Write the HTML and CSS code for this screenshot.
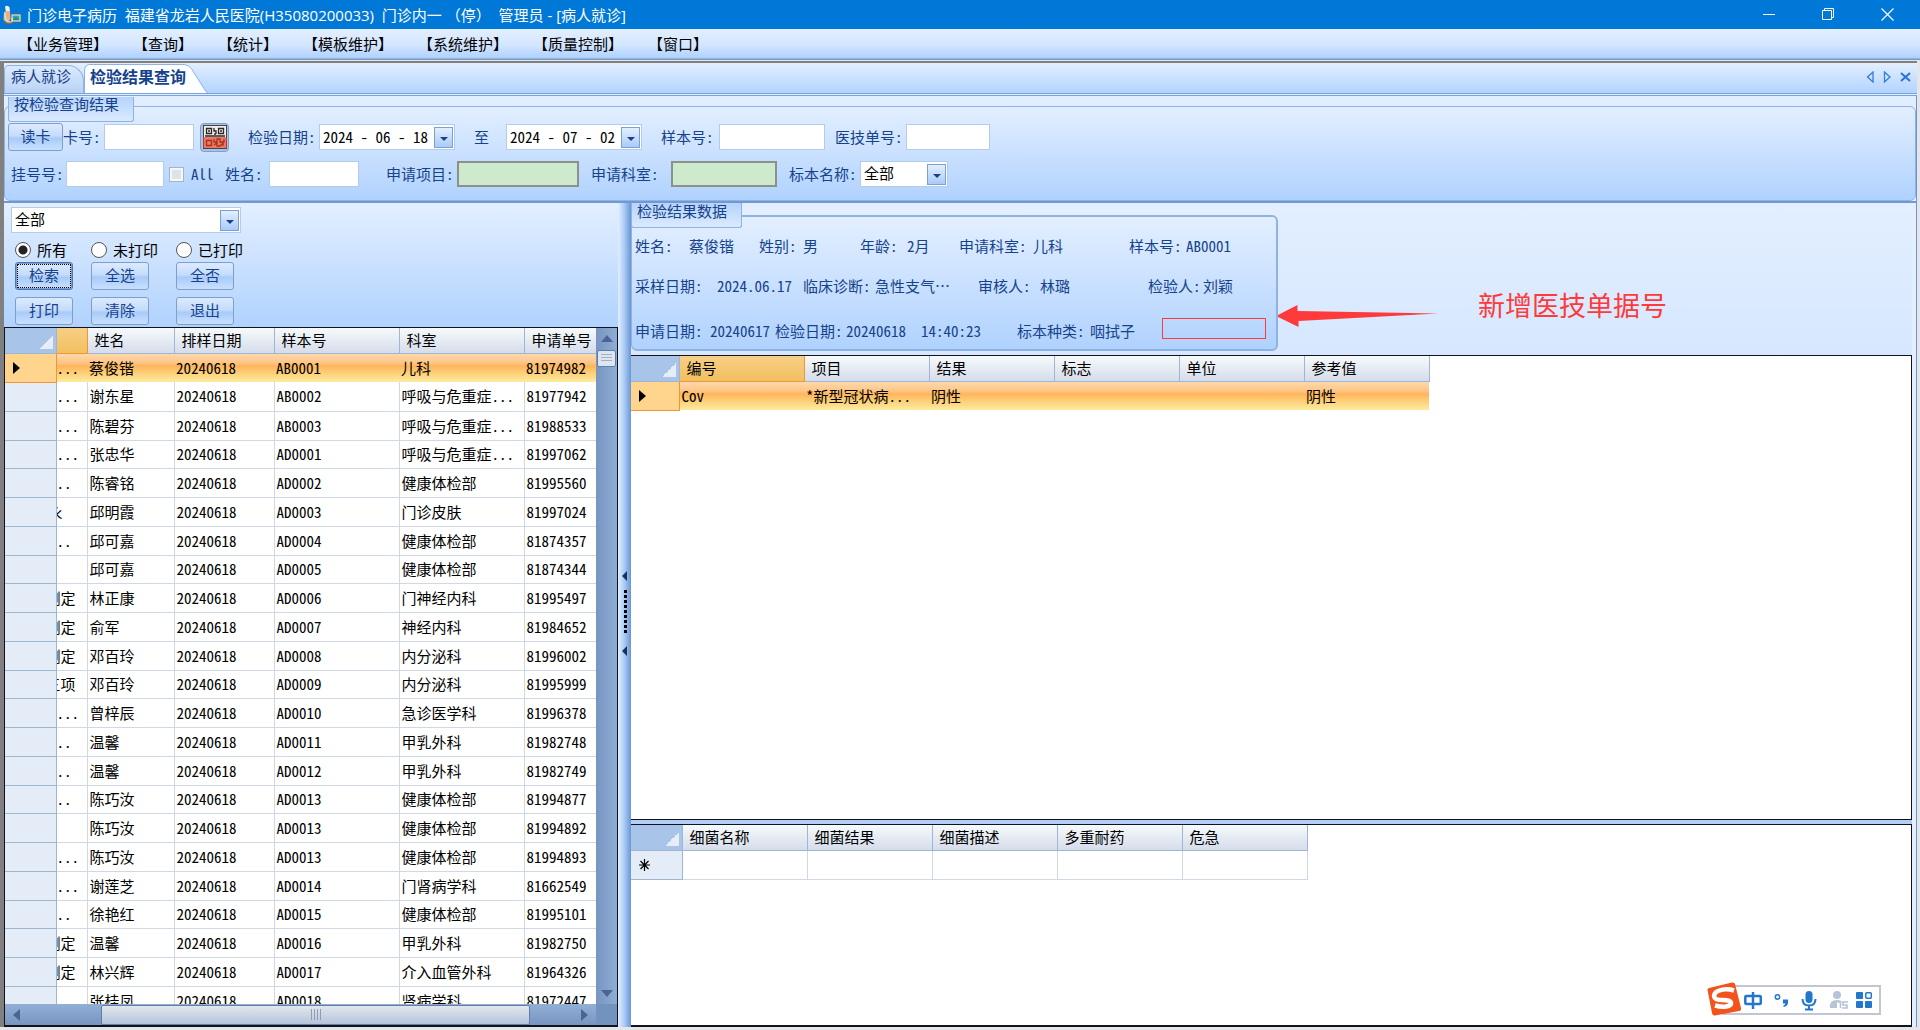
FILE: index.html
```html
<!DOCTYPE html>
<html lang="zh-CN">
<head>
<meta charset="utf-8">
<title>门诊电子病历</title>
<link rel="stylesheet" href="styles.css">
</head>
<body>
<header class="titlebar">
  <svg class="app-icon" width="20" height="20" viewBox="0 0 20 20">
    <rect x="9" y="9" width="10" height="8" fill="#e8f2f6" stroke="#4a6a7a"/>
    <rect x="10.500" y="10.500" width="7" height="5" fill="#2ba3c4"/>
    <path d="M11 15l3-3 3.500 3z" fill="#3e8a3a"/>
    <path d="M3 1.500q3-2 4.500 1l.5 4-4 1z" fill="#f4efe6"/>
    <path d="M2 7q4-2 6 0l.5 7-3 4-4-3z" fill="#e9b183"/>
    <path d="M3 8q0 8 4 9t3-4" fill="none" stroke="#d8dde2" stroke-width="1.500"/>
    <path d="M2 17q4 3 9 .5" fill="none" stroke="#8a6a3a" stroke-width="1.500"/>
  </svg>
  <h1 class="title">门诊电子病历&nbsp; 福建省龙岩人民医院(H35080200033)&nbsp; 门诊内一&nbsp;（停）&nbsp; 管理员 - [病人就诊]</h1>
  <div class="window-buttons">
    <button type="button" aria-label="最小化"><svg width="13" height="13"><path d="M0 6.500h12" stroke="#fff"/></svg></button>
    <button type="button" aria-label="还原"><svg width="13" height="13" fill="none" stroke="#fff"><path d="M.5 2.500h9v9h-9zM2.500 2.500v-2h9v9h-2"/></svg></button>
    <button type="button" aria-label="关闭"><svg width="13" height="13"><path d="M.5.5l12 12M12.500.5l-12 12" stroke="#fff" stroke-width="1.200"/></svg></button>
  </div>
</header>

<nav class="menubar">
  <button type="button">【业务管理】</button>
  <button type="button">【查询】</button>
  <button type="button">【统计】</button>
  <button type="button">【模板维护】</button>
  <button type="button">【系统维护】</button>
  <button type="button">【质量控制】</button>
  <button type="button">【窗口】</button>
</nav>

<main class="workspace">
  <div class="tabstrip">
    <button type="button" class="tab">病人就诊</button>
    <button type="button" class="tab tab-active">
      <svg class="tab-shape" width="124" height="29" viewBox="0 0 124 29"><path d="M.5 29V6q0-4.500 4-5.500H100q5 0 8 5l12 19q2 4 4 4.500" fill="#fdfeff" stroke="#8db2e3"/></svg>
      <span>检验结果查询</span>
    </button>
    <div class="tab-tools">
      <button type="button" aria-label="上一个"><svg width="9" height="12"><path d="M7 1v10L1.500 6z" fill="#cfe2fb" stroke="#2f7de0" stroke-width="1.300"/></svg></button>
      <button type="button" aria-label="下一个"><svg width="9" height="12"><path d="M1.500 1v10L7 6z" fill="#cfe2fb" stroke="#2f7de0" stroke-width="1.300"/></svg></button>
      <button type="button" aria-label="关闭标签"><svg width="11" height="10"><path d="M1 1l9 8M10 1L1 9" stroke="#2b72d8" stroke-width="2"/></svg></button>
    </div>
  </div>

  <section class="filter">
    <h2 class="group-title">按检验查询结果</h2>
    <div class="filter-row">
      <button type="button" class="btn">读卡</button>
      <label class="w-40" for="card">卡号:</label><input id="card" class="box w-90" type="text">
      <button type="button" class="qr" aria-label="扫码">
        <svg width="24" height="24" viewBox="0 0 24 24"><rect x=".5" y=".5" width="23" height="23" fill="#f3efec" stroke="#444"/>
          <g fill="none" stroke="#2a2526" stroke-width="1.300"><path d="M3.500 3.500h5v5h-5zM15.500 3.500h5v5h-5zM3.500 15.500h5v5h-5zM11 3v3h2v3M11 9h2M5 6h2M17 6h2M2 11h20M11 14v3h3v-3h3v3h4v-3M11 20l3-2v3h3l3-3v3"/></g>
          <rect x="0" y="12" width="24" height="11" fill="#e8391c" opacity=".65"/></svg>
      </button>
      <label class="w-70 gap-before" for="d1">检验日期:</label>
      <span class="combo w-136"><input id="d1" type="text" value="2024 - 06 - 18"><button type="button" class="drop" aria-label="选择日期"></button></span>
      <label class="w-30 gap-before" for="d2">至</label>
      <span class="combo w-136"><input id="d2" type="text" value="2024 - 07 - 02"><button type="button" class="drop" aria-label="选择日期"></button></span>
      <label class="w-58 gap-before" for="sample">样本号:</label><input id="sample" class="box w-106" type="text">
      <label class="w-70 gap-mini" for="order">医技单号:</label><input id="order" class="box w-84" type="text">
    </div>
    <div class="filter-row">
      <label class="w-58 lead" for="reg">挂号号:</label><input id="reg" class="box w-98" type="text">
      <input id="all" class="check" type="checkbox"><label class="w-34" for="all">All</label>
      <label class="w-44" for="name">姓名:</label><input id="name" class="box w-90" type="text">
      <label class="w-70 gap-wide" for="item">申请项目:</label><input id="item" class="box green w-122" type="text">
      <label class="w-80 gap-tiny" for="dept">申请科室:</label><input id="dept" class="box green w-106" type="text">
      <label class="w-70 gap-tiny" for="kind">标本名称:</label>
      <span class="combo w-88"><select id="kind"><option>全部</option></select><i class="drop"></i></span>
    </div>
  </section>

  <div class="panes">
    <section class="left">
      <div class="search">
        <span class="combo w-230"><select aria-label="范围"><option>全部</option></select><i class="drop"></i></span>
        <div class="search-grid radios">
          <label><input type="radio" name="p" checked>所有</label>
          <label><input type="radio" name="p">未打印</label>
          <label><input type="radio" name="p">已打印</label>
        </div>
        <div class="search-grid buttons">
          <button type="button" class="btn focused">检索</button>
          <button type="button" class="btn">全选</button>
          <button type="button" class="btn">全否</button>
          <button type="button" class="btn">打印</button>
          <button type="button" class="btn">清除</button>
          <button type="button" class="btn">退出</button>
        </div>
      </div>
      <div class="list">
        <div class="list-view">
          <table class="grid patients">
            <colgroup><col class="c-51"><col class="c-31"><col class="c-87"><col class="c-100"><col class="c-125"><col class="c-125"><col class="c-72"></colgroup>
            <thead><tr><th class="corner"></th><th class="hot"></th><th>姓名</th><th>排样日期</th><th>样本号</th><th>科室</th><th>申请单号</th></tr></thead>
            <tbody>
              <tr class="selected"><th><i class="marker"></i></th><td>...</td><td>蔡俊锴</td><td>20240618</td><td>AB0001</td><td>儿科</td><td>81974982</td></tr>
              <tr><th></th><td>...</td><td>谢东星</td><td>20240618</td><td>AB0002</td><td>呼吸与危重症...</td><td>81977942</td></tr>
              <tr><th></th><td>...</td><td>陈碧芬</td><td>20240618</td><td>AB0003</td><td>呼吸与危重症...</td><td>81988533</td></tr>
              <tr><th></th><td>...</td><td>张忠华</td><td>20240618</td><td>AD0001</td><td>呼吸与危重症...</td><td>81997062</td></tr>
              <tr><th></th><td>..</td><td>陈睿铭</td><td>20240618</td><td>AD0002</td><td>健康体检部</td><td>81995560</td></tr>
              <tr><th></th><td><div class="clip narrow">永</div></td><td>邱明霞</td><td>20240618</td><td>AD0003</td><td>门诊皮肤</td><td>81997024</td></tr>
              <tr><th></th><td>..</td><td>邱可嘉</td><td>20240618</td><td>AD0004</td><td>健康体检部</td><td>81874357</td></tr>
              <tr><th></th><td></td><td>邱可嘉</td><td>20240618</td><td>AD0005</td><td>健康体检部</td><td>81874344</td></tr>
              <tr><th></th><td><div class="clip">测定</div></td><td>林正康</td><td>20240618</td><td>AD0006</td><td>门神经内科</td><td>81995497</td></tr>
              <tr><th></th><td><div class="clip">测定</div></td><td>俞军</td><td>20240618</td><td>AD0007</td><td>神经内科</td><td>81984652</td></tr>
              <tr><th></th><td><div class="clip">测定</div></td><td>邓百玲</td><td>20240618</td><td>AD0008</td><td>内分泌科</td><td>81996002</td></tr>
              <tr><th></th><td><div class="clip">三项</div></td><td>邓百玲</td><td>20240618</td><td>AD0009</td><td>内分泌科</td><td>81995999</td></tr>
              <tr><th></th><td>...</td><td>曾梓辰</td><td>20240618</td><td>AD0010</td><td>急诊医学科</td><td>81996378</td></tr>
              <tr><th></th><td>..</td><td>温馨</td><td>20240618</td><td>AD0011</td><td>甲乳外科</td><td>81982748</td></tr>
              <tr><th></th><td>..</td><td>温馨</td><td>20240618</td><td>AD0012</td><td>甲乳外科</td><td>81982749</td></tr>
              <tr><th></th><td>..</td><td>陈巧汝</td><td>20240618</td><td>AD0013</td><td>健康体检部</td><td>81994877</td></tr>
              <tr><th></th><td></td><td>陈巧汝</td><td>20240618</td><td>AD0013</td><td>健康体检部</td><td>81994892</td></tr>
              <tr><th></th><td>...</td><td>陈巧汝</td><td>20240618</td><td>AD0013</td><td>健康体检部</td><td>81994893</td></tr>
              <tr><th></th><td>...</td><td>谢莲芝</td><td>20240618</td><td>AD0014</td><td>门肾病学科</td><td>81662549</td></tr>
              <tr><th></th><td>..</td><td>徐艳红</td><td>20240618</td><td>AD0015</td><td>健康体检部</td><td>81995101</td></tr>
              <tr><th></th><td><div class="clip">测定</div></td><td>温馨</td><td>20240618</td><td>AD0016</td><td>甲乳外科</td><td>81982750</td></tr>
              <tr><th></th><td><div class="clip">测定</div></td><td>林兴辉</td><td>20240618</td><td>AD0017</td><td>介入血管外科</td><td>81964326</td></tr>
              <tr><th></th><td></td><td>张桂凤</td><td>20240618</td><td>AD0018</td><td>肾病学科</td><td>81972447</td></tr>
            </tbody>
          </table>
        </div>
        <div class="vscroll">
          <svg width="12" height="7"><path d="M0 7l6-7 6 7z" fill="#4a6494"/></svg>
          <div class="vthumb"></div>
          <svg class="push" width="12" height="7"><path d="M0 0l6 7 6-7z" fill="#4a6494"/></svg>
        </div>
        <div class="hscroll">
          <svg width="7" height="12"><path d="M7 0L0 6l7 6z" fill="#4a6494"/></svg>
          <div class="hthumb"></div>
          <svg class="push" width="7" height="12"><path d="M0 0l7 6-7 6z" fill="#4a6494"/></svg>
        </div>
        <div class="scroll-corner"></div>
      </div>
    </section>

    <div class="splitter">
      <svg width="6" height="90" viewBox="0 0 6 90"><g fill="#15315e"><path d="M5 1v10L0 6zM5 76v10l-5-5z"/></g><path d="M3.500 20v44" stroke="#000" stroke-width="3" stroke-dasharray="3 2"/></svg>
    </div>

    <section class="right">
      <div class="detail-area">
        <div class="detail">
          <h2 class="group-title">检验结果数据</h2>
          <div class="detail-row r1"><span>姓名:</span><span>蔡俊锴</span><span>姓别:</span><span>男</span><span>年龄:</span><span>2月</span><span>申请科室:</span><span>儿科</span><span>样本号:</span><span>AB0001</span></div>
          <div class="detail-row r2"><span>采样日期:</span><span>2024.06.17</span><span>临床诊断:</span><span>急性支气⋯</span><span>审核人:</span><span>林璐</span><span>检验人:</span><span>刘颖</span></div>
          <div class="detail-row r3"><span>申请日期:</span><span>20240617</span><span>检验日期:</span><span>20240618&nbsp; 14:40:23</span><span>标本种类:</span><span>咽拭子</span><span class="new-field"></span></div>
        </div>
        <div class="note">
          <svg width="162" height="24" viewBox="0 0 162 24"><path d="M0 12L21.500 1v6L162 9.500 22.500 17v6z" fill="#ff3a3a"/></svg>
          <span>新增医技单据号</span>
        </div>
      </div>
      <div class="results">
        <table class="grid">
          <colgroup><col class="c-47"><col class="c-125"><col class="c-125"><col class="c-125"><col class="c-125"><col class="c-125"><col class="c-125"></colgroup>
          <thead><tr><th class="corner"></th><th class="hot">编号</th><th>项目</th><th>结果</th><th>标志</th><th>单位</th><th>参考值</th></tr></thead>
          <tbody><tr class="selected"><th><i class="marker"></i></th><td>Cov</td><td>*新型冠状病...</td><td>阴性</td><td></td><td></td><td>阴性</td></tr></tbody>
        </table>
      </div>
      <div class="bacteria">
        <table class="grid">
          <colgroup><col class="c-50"><col class="c-125"><col class="c-125"><col class="c-125"><col class="c-125"><col class="c-125"></colgroup>
          <thead><tr><th class="corner"></th><th>细菌名称</th><th>细菌结果</th><th>细菌描述</th><th>多重耐药</th><th>危急</th></tr></thead>
          <tbody><tr><th><svg class="star" width="11" height="12" viewBox="0 0 11 12"><path d="M5.500 0v12M0 6h11M1.500 2l8 8M9.500 2l-8 8" stroke="#000" stroke-width="1.200"/></svg></th><td></td><td></td><td></td><td></td><td></td></tr></tbody>
        </table>
      </div>
    </section>
  </div>
</main>

<aside class="ime">
  <svg class="ime-logo" width="36" height="36" viewBox="0 0 36 36">
    <path d="M3 7Q1 7.500 1.500 9L6 32q.5 3 3 2.500L33 30q2.500-.5 2-3L29 3q-.5-2-3-1.500z" fill="#f2541c"/>
    <path d="M28 9.500Q20 7 12 10q-5 2.500-3.500 6.500 1 2.500 8 2.500 8 0 8.500 2.500.5 3-5 4-5 .7-11-1" fill="none" stroke="#fff" stroke-width="4.500"/>
  </svg>
  <svg width="18" height="19" viewBox="0 0 18 19" fill="none" stroke="#2277cc" stroke-width="2.500"><rect x="1.300" y="5" width="15.500" height="8" rx="1"/><path d="M9 1v17"/></svg>
  <svg width="15" height="15" viewBox="0 0 15 15"><circle cx="3.500" cy="4" r="2.200" fill="none" stroke="#2277cc" stroke-width="1.500"/><path d="M9 6.500h5v4q-1 3-4.500 3.500v-1.500q1.500-.5 2-2H9z" fill="#2277cc"/></svg>
  <svg width="16" height="21" viewBox="0 0 16 21"><rect x="4.500" y="1" width="7" height="12" rx="3.500" fill="#2277cc"/><path d="M1.500 9q0 6.500 6.500 6.500T14.500 9M8 15v4M4 19.500h8" fill="none" stroke="#2277cc" stroke-width="2"/></svg>
  <svg width="20" height="20" viewBox="0 0 20 20"><circle cx="8" cy="5" r="4" fill="#b7c3d8"/><path d="M1 18q-1-8 7-8 4 0 5 2H8v6z" fill="#b7c3d8"/><path d="M8.500 12h3v6M19 12h-5v3h4v3h-5" fill="none" stroke="#b7c3d8" stroke-width="1.600"/></svg>
  <svg class="ime-grid" width="18" height="18" viewBox="0 0 18 18"><g fill="#2277cc"><rect x="1" y="1" width="7" height="7" rx="1"/><rect x="1" y="10" width="7" height="7" rx="1"/><rect x="10" y="10" width="7" height="7" rx="1"/></g><rect x="10.800" y="1.800" width="5.500" height="5.500" rx="1" fill="none" stroke="#2277cc" stroke-width="1.500"/></svg>
</aside>
</body>
</html>
```

FILE: styles.css
```css
* { box-sizing: border-box; }
body {
  margin: 0;
  height: 100vh;
  display: flex;
  flex-direction: column;
  overflow: hidden;
  background: #e4e6ea;
  color: #000;
  font: 15px/20px "Noto Sans Mono CJK SC", "Noto Sans CJK SC", sans-serif;
}
button, input, select { font: inherit; color: inherit; margin: 0; padding: 0; border: 0; border-radius: 0; background: none; }
svg { display: block; flex: none; }
h1, h2 { margin: 0; font-weight: 400; }

.titlebar { display: flex; align-items: center; height: 29px; flex: none; padding: 0 3px 0 2px; background: #0078d7; color: #fff; }
.app-icon { margin-right: 5px; }
.title { font: 15px/20px "Open Sans", "Noto Sans CJK SC", sans-serif; white-space: nowrap; flex: 1; }
.window-buttons { display: flex; }
.window-buttons button { width: 59px; height: 29px; display: grid; place-items: center; }

.menubar { display: flex; gap: 25px; height: 31px; flex: none; padding-left: 18px; align-items: center; background: linear-gradient(#e3efff, #d3e5ff 55%, #b0d2ff 95%); border-bottom: 1px solid #7f9db9; box-shadow: inset 0 -1px #8db2e3; }
.menubar button { font-family: "Noto Sans CJK SC", sans-serif; white-space: nowrap; }

.workspace { flex: 1; min-height: 0; display: flex; flex-direction: column; margin: 1px 3px 3px 0; border: solid #808080; border-width: 2px 0 0 4px; box-shadow: inset -1px 0 #6f93cc; background: #e3efff; color: #15428b; }
.tabstrip { display: flex; align-items: flex-end; height: 33px; flex: none; background: linear-gradient(#e3efff, #b2d3ff); border-bottom: 3px double #7aa3da; }
.tab { position: relative; width: 80px; height: 28px; border: 1px solid #8db2e3; border-bottom: 0; border-radius: 5px 16px 0 0; background: linear-gradient(#dbe9fd, #b9d3f5); display: flex; align-items: center; padding: 0 0 7px 6px; white-space: nowrap; }
.tab-active { width: 110px; border: 0; background: none; font-size: 16px; font-weight: 700; }
.tab-active span { position: relative; }
.tab-shape { position: absolute; left: 0; bottom: 0; }
.tab-tools { display: flex; align-items: center; gap: 8px; margin-left: auto; height: 28px; padding-right: 6px; padding-bottom: 4px; }

.group-title { position: relative; width: max-content; height: 25px; padding: 0 14px 0 5px; line-height: 13px; font-size: 15px; border: 1px solid #8db2e3; border-top: 0; border-radius: 0 0 3px 3px; background: linear-gradient(#b5d3fb, #dbeaff); }
.filter { position: relative; flex: none; margin-right: 1px; padding: 1px 0 13px 4px; background: #e1eeff; border-bottom: 2px solid #7099d2; display: flex; flex-direction: column; align-items: flex-start; }
.filter::before { content: ""; position: absolute; inset: 10px 0 0 0; border: 1px solid #8db2e3; border-radius: 6px; background: linear-gradient(#e3efff, #b0d2ff); }
.filter-row { position: relative; display: flex; align-items: center; height: 28px; margin-top: 1px; white-space: nowrap; }
.filter-row + .filter-row { margin-top: 9px; }
.filter-row label { flex: none; }
.gap-before { margin-left: 19px; }
.gap-wide { margin-left: 27px; }
.gap-tiny { margin-left: 12px; }
.gap-mini { margin-left: 10px; }
.lead { padding-left: 3px; }
.w-30 { width: 32px; } .w-34 { width: 34px; } .w-40 { width: 41px; } .w-44 { width: 44px; }
.w-58 { width: 58px; } .w-70 { width: 71px; } .w-80 { width: 80px; }
.w-84 { width: 84px; } .w-88 { width: 88px; } .w-90 { width: 90px; } .w-98 { width: 98px; }
.w-106 { width: 106px; } .w-122 { width: 122px; } .w-136 { width: 136px; } .w-230 { width: 230px; }
.box { height: 26px; background: #fff; border: 1px solid #b3cbec; }
.green { background: #cdeacd; border: 2px solid #8d918c; }
.check { appearance: none; width: 15px; height: 15px; margin: 0 7px 0 5px; border: 1px solid #a9b4c2; background: #dfe3e8; box-shadow: inset 0 0 0 2px #f5f6f8; }
.combo { position: relative; display: flex; height: 26px; background: #fff; border: 1px solid #b3cbec; color: #000; }
.combo input { flex: 1; min-width: 0; padding-left: 3px; }
.combo select { appearance: none; width: 100%; padding: 0 0 2px 3px; }
.drop { position: absolute; right: 1px; top: 2px; width: 19px; height: 21px; border: 1px solid #7ba0d6; background: linear-gradient(#e3efff, #a9cbf8); }
.drop::after { content: ""; position: absolute; left: 5px; top: 9px; border: 4px solid transparent; border-top-color: #15428b; border-bottom: 0; }
.btn { height: 28px; width: 55px; border: 1px solid #7f9fcb; border-radius: 3px; background: linear-gradient(#dceaff, #c5dcfb 45%, #a9cbf8 55%, #c8e0ff); color: #15428b; padding-bottom: 3px; }
.qr { margin-left: 6px; width: 29px; height: 29px; border: 1px solid #7f9fcb; border-radius: 4px; display: grid; place-items: center; background: #a9c3e8; }

.panes { flex: 1; min-height: 0; display: flex; }
.left { width: 614px; flex: none; display: flex; flex-direction: column; }
.search { height: 124px; flex: none; padding: 4px 7px 0 7px; background: linear-gradient(#e3efff, #b0d2ff); color: #000; }
.search-grid { display: grid; grid-template-columns: 76px 85px 58px; padding-left: 4px; align-items: center; }
.radios { height: 29px; white-space: nowrap; padding-top: 4px; }
.radios label { display: flex; align-items: center; gap: 6px; }
.radios input { appearance: none; flex: none; width: 16px; height: 16px; border: 1px solid #555; border-radius: 50%; background: #fff; }
.radios input:checked { background: radial-gradient(#222 4px, #fff 5px); }
.buttons { row-gap: 7px; }
.buttons .btn { width: 58px; }
.focused { outline: 1px dotted #000; outline-offset: -3px; border-color: #4c77b8; box-shadow: inset 0 0 0 1px #7f9fcb; }

.list { flex: 1; min-height: 0; display: grid; grid-template: minmax(0, 1fr) 21px / minmax(0, 1fr) 21px; border: 1px solid #10131a; border-width: 1px 1px 2px 1px; background: #fff; }
.list-view { overflow: hidden; min-height: 0; }
.grid { border-collapse: collapse; table-layout: fixed; width: 0; color: #000; }
.grid th, .grid td { padding: 0 0 0 2px; height: 29px; border: solid #d0d7e5; border-width: 0 1px 1px 0; text-align: left; font-weight: 400; white-space: nowrap; overflow: hidden; }
.patients tbody tr:nth-child(4n) > * { height: 28px; }
.patients tbody td:nth-child(2) { padding-left: 0; }
.grid thead th { height: 25px; padding-left: 7px; border-color: #9eb6d3; background: linear-gradient(#f6fafb, #d5dcea); }
.grid thead .hot { background: linear-gradient(#f6ce86, #f1c05f); border-color: #f29536; }
.grid thead .corner { background: linear-gradient(135deg, transparent 50%, #e8edf5 50%) right 3px bottom 4px / 14px 14px no-repeat, #a9c4e9; }
.grid tbody th { background: #e4ecf7; border-color: #9eb6ce; padding-left: 8px; }
.grid .selected th { background: #ffd58d; border-color: #f29536; }
.grid .selected td { border: 0; }
.grid .selected { background: linear-gradient(#fcdcb2, #fec483 35%, #ffb55c 45%, #fdd078 70%, #fdeb9f); }
.marker { display: block; border: 6px solid transparent; border-left: 7px solid #000; border-right: 0; }
.clip { width: 19px; overflow: hidden; display: flex; justify-content: flex-end; }
.narrow { width: 6px; }
.c-31 { width: 31px; } .c-47 { width: 48px; } .c-50 { width: 51px; } .c-51 { width: 51px; }
.c-72 { width: 73px; } .c-87 { width: 87px; } .c-100 { width: 100px; } .c-125 { width: 125px; }

.vscroll { display: flex; flex-direction: column; align-items: center; gap: 8px; padding: 7px 0; background: linear-gradient(90deg, #7795c0, #8eadd6); }
.push { margin-top: auto; }
.vthumb { width: 19px; height: 17px; border: 1px solid #5f7eaa; border-radius: 2px; background: repeating-linear-gradient(#a4b0c4 0 1px, transparent 1px 3px) center / 11px 9px no-repeat, #dde5f0; }
.hscroll { display: flex; align-items: center; padding: 0 8px; background: linear-gradient(#93afd6, #7795c0); }
.hthumb { width: 429px; height: 20px; margin-left: 81px; border: 1px solid #5f7eaa; border-radius: 2px; background: repeating-linear-gradient(90deg, #8e9db5 0 1px, transparent 1px 3px) center / 10px 11px no-repeat, linear-gradient(#e3e7ec, #b4c4dc); }
.hscroll .push { margin-top: 0; margin-left: auto; }
.scroll-corner { background: #7393bf; }

.splitter { width: 13px; flex: none; background: linear-gradient(90deg, #e3efff, #a9c9f5 50%, #6b96d3); display: flex; align-items: center; justify-content: center; }

.right { flex: 1; min-width: 0; display: flex; flex-direction: column; margin-right: 5px; }
.detail-area { display: flex; height: 152px; flex: none; background: linear-gradient(#e3efff, #d6e7ff); }
.detail { position: relative; width: 647px; flex: none; margin-bottom: 4px; padding: 0 4px; z-index: 0; }
.detail::before { content: ""; position: absolute; z-index: -1; inset: 12px 0 0 0; border: 2px solid #8db2e3; border-left-width: 1px; border-radius: 6px; background: linear-gradient(#e3efff, #b0d2ff); }
.detail .group-title { margin-left: -4px; line-height: 15px; }
.detail-row { display: grid; height: 28px; align-items: center; white-space: nowrap; }
.group-title + .detail-row { margin-top: 4px; }
.detail-row + .r2 { margin-top: 12px; }
.detail-row + .r3 { margin-top: 17px; }
.r1 { grid-template-columns: 54px 70px 44px 57px 47px 52px 74px 96px 57px 1fr; }
.r2 { grid-template-columns: 82px 86px 72px 103px 62px 108px 55px 1fr; }
.r3 { grid-template-columns: 75px 65px 71px 171px 73px 72px 104px; }
.new-field { height: 21px; margin-bottom: 6px; border: 1px solid #ff3a3a; }
.note { display: flex; align-items: center; gap: 40px; padding-top: 52px; color: #ff3a3a; font: 27px/36px "Noto Sans CJK SC", sans-serif; white-space: nowrap; }
.note svg { margin: 22px 0 0 -2px; }
.results { flex: 1; min-height: 0; background: #fff; border: 1px solid #10131a; border-width: 1px 1px 1px 0; }
.bacteria { height: 203px; flex: none; margin-top: 4px; background: #fff; border: solid #10131a; border-width: 1px 1px 2px 0; box-shadow: 0 -4px #b3cff5; }

.ime { position: absolute; right: 39px; bottom: 15px; height: 30px; display: flex; align-items: center; gap: 12px; padding: 0 6px 0 20px; background: #fff; border: 2px solid #c3c6d2; }
.ime-logo { position: absolute; left: -18px; top: -6px; }
.ime-grid { margin-left: -6px; }
```
